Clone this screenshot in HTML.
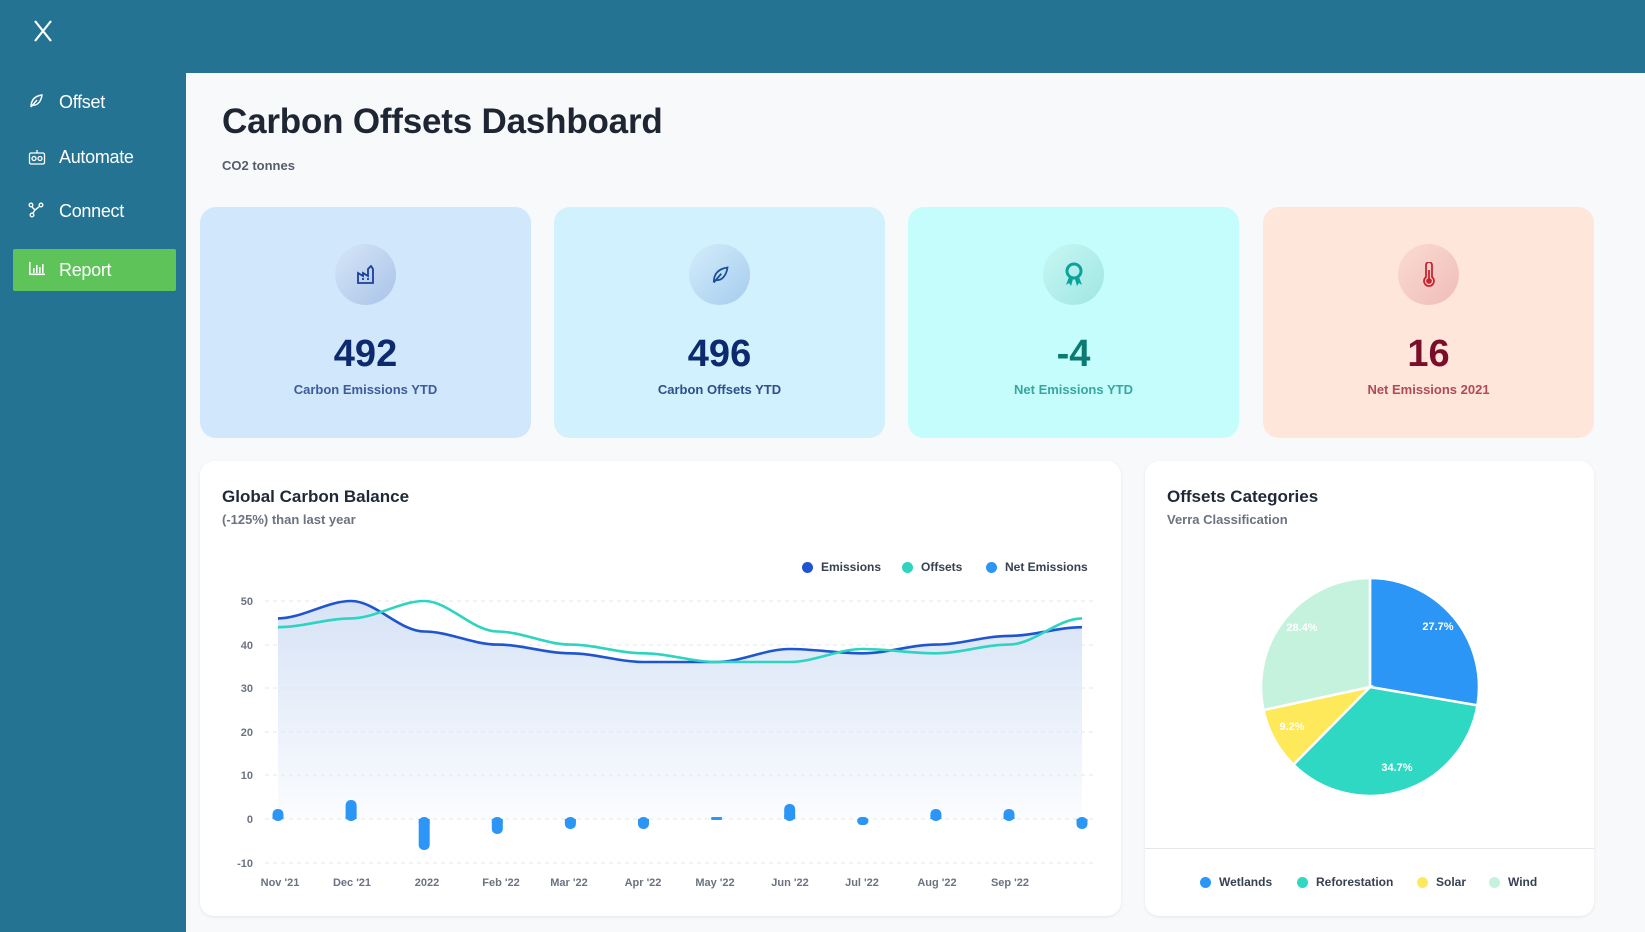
<!DOCTYPE html>
<html><head><meta charset="utf-8"><style>
*{box-sizing:border-box;margin:0;padding:0}
body{width:1645px;height:932px;overflow:hidden;background:#f8f9fb;font-family:"Liberation Sans",sans-serif;position:relative}
.hdr{position:absolute;left:0;top:0;width:1645px;height:73px;background:#247393}
.side{position:absolute;left:0;top:73px;width:186px;height:859px;background:#247393}
.nav{position:absolute;left:13px;width:163px;height:42px;color:#fff;font-size:18px;display:flex;align-items:center;padding-left:46px;letter-spacing:-0.3px}
.nav svg{position:absolute;left:15px;top:12px}
.card{position:absolute;top:207px;width:331px;height:231px;border-radius:16px;text-align:center}
.ic{position:absolute;left:135px;top:37px;width:61px;height:61px;border-radius:50%;display:flex;align-items:center;justify-content:center}
.num{position:absolute;left:0;right:0;top:126px;font-size:38px;font-weight:bold}
.lbl{position:absolute;left:0;right:0;top:175px;font-size:13px;font-weight:bold}
.panel{position:absolute;top:461px;height:455px;background:#fff;border-radius:14px;box-shadow:0 1px 3px rgba(0,0,0,.08)}
.pt{position:absolute;left:22px;top:26px;font-size:17px;font-weight:bold;color:#1f2937}
.ps{position:absolute;left:22px;top:51px;font-size:13px;font-weight:bold;color:#6b7280}
.leg{position:absolute;font-size:12px;font-weight:bold;color:#374151;display:flex;align-items:center}
.leg i{display:inline-block;width:11px;height:11px;border-radius:50%;margin-right:8px}
</style></head><body>
<div class="hdr"><svg style="position:absolute;left:33px;top:20px" width="20" height="22" viewBox="0 0 20 22"><path d="M2 1L18 21M18 1L2 21" stroke="#fff" stroke-width="2.2"/></svg></div>
<div class="side">
 <div class="nav" style="top:8px"><svg width="16" height="16" viewBox="0 0 16 16" fill="none" stroke="#fff" stroke-width="1.4"><path d="M3 14C3 7 7 3 14 2C13 9 9 13 4 12M3 14L9 7"/></svg>Offset</div>
 <div class="nav" style="top:63px"><svg width="18" height="18" viewBox="0 0 18 18" fill="none" stroke="#fff" stroke-width="1.3"><rect x="1.5" y="5" width="15" height="11" rx="1.5"/><circle cx="6" cy="10.5" r="2"/><circle cx="12" cy="10.5" r="2"/><path d="M9 5V2"/></svg>Automate</div>
 <div class="nav" style="top:117px"><svg width="16" height="16" viewBox="0 0 16 16" fill="none" stroke="#fff" stroke-width="1.4"><circle cx="3" cy="3" r="1.8"/><circle cx="13" cy="3" r="1.8"/><circle cx="4" cy="13" r="1.8"/><path d="M4 5L7 8L12 4M7 8L5 11"/></svg>Connect</div>
 <div class="nav" style="top:176px;background:#5ec45a;border-radius:2px"><svg width="18" height="16" viewBox="0 0 18 16" fill="#fff"><rect x="1" y="1" width="1.6" height="13"/><rect x="1" y="12.5" width="16" height="1.6"/><rect x="5" y="7" width="1.6" height="5"/><rect x="8" y="4" width="1.6" height="8"/><rect x="11" y="6" width="1.6" height="6"/><rect x="14" y="3" width="1.6" height="9"/></svg>Report</div>
</div>
<div style="position:absolute;left:222px;top:102px;font-size:35px;font-weight:bold;color:#1f2633;letter-spacing:-0.2px">Carbon Offsets Dashboard</div>
<div style="position:absolute;left:222px;top:158px;font-size:13px;font-weight:bold;color:#555d6b">CO2 tonnes</div>

<div class="card" style="left:200px;background:#d1e8fc">
 <div class="ic" style="background:linear-gradient(135deg,#d6e6f8,#a9c3e8)"><svg width="20" height="20" viewBox="0 0 20 20" fill="none" stroke="#1c3f9a" stroke-width="1.8"><path d="M2 18V8L7 11V8L12 11V4L15 1L17 4V18Z"/><path d="M6 14h2M11 14h2"/></svg></div>
 <div class="num" style="color:#0d2a6e">492</div><div class="lbl" style="color:#3e5b9a">Carbon Emissions YTD</div></div>
<div class="card" style="left:554px;background:#d0f1fd">
 <div class="ic" style="background:linear-gradient(135deg,#d4ecfb,#a5cdee)"><svg width="20" height="20" viewBox="0 0 16 16" fill="none" stroke="#1c4f9a" stroke-width="1.4"><path d="M3 14C3 7 7 3 14 2C13 9 9 13 4 12M3 14L9 7"/></svg></div>
 <div class="num" style="color:#0d2a6e">496</div><div class="lbl" style="color:#2e4f8a">Carbon Offsets YTD</div></div>
<div class="card" style="left:908px;background:#c4fdfc">
 <div class="ic" style="background:linear-gradient(135deg,#c8f7f4,#9ee6e2)"><svg width="20" height="26" viewBox="0 0 20 26" fill="#0aa39a"><circle cx="10" cy="9" r="7" fill="none" stroke="#0aa39a" stroke-width="3"/><path d="M5 15L2 23L5 21L7 24L9 17ZM15 15L18 23L15 21L13 24L11 17Z"/></svg></div>
 <div class="num" style="color:#0b7a73">-4</div><div class="lbl" style="color:#3aa6a0">Net Emissions YTD</div></div>
<div class="card" style="left:1263px;background:#fee6da">
 <div class="ic" style="background:linear-gradient(135deg,#fadbd3,#f0bdb8)"><svg width="14" height="26" viewBox="0 0 14 26" fill="none" stroke="#c9252f" stroke-width="1.8"><path d="M4 3a3 3 0 0 1 6 0V15a5 5 0 1 1-6 0Z"/><circle cx="7" cy="19" r="2" fill="#c9252f"/><path d="M7 8V18"/></svg></div>
 <div class="num" style="color:#7a0d2a">16</div><div class="lbl" style="color:#b04a5a">Net Emissions 2021</div></div>

<div class="panel" style="left:200px;width:921px">
 <div class="pt">Global Carbon Balance</div><div class="ps">(-125%) than last year</div>
 <div class="leg" style="left:602px;top:99px"><i style="background:#1e55d0"></i>Emissions</div>
 <div class="leg" style="left:702px;top:99px"><i style="background:#2dd4bf"></i>Offsets</div>
 <div class="leg" style="left:786px;top:99px"><i style="background:#2b96f5"></i>Net Emissions</div>
</div>
<svg style="position:absolute;left:0;top:0" width="1645" height="932">
 <defs><linearGradient id="g" x1="0" y1="0" x2="0" y2="1"><stop offset="0" stop-color="#d7e3f6"/><stop offset="1" stop-color="#d7e3f6" stop-opacity="0.1"/></linearGradient></defs>
 <g stroke="#e5e7eb" stroke-dasharray="4 4" stroke-width="1">
  <path d="M265 601H1097M265 645H1097M265 688H1097M265 732H1097M265 775H1097M265 819H1097M265 863H1097"/>
 </g>
 <g font-size="11" font-weight="bold" fill="#6b7280" text-anchor="end" font-family="Liberation Sans">
  <text x="253" y="605">50</text><text x="253" y="649">40</text><text x="253" y="692">30</text><text x="253" y="736">20</text><text x="253" y="779">10</text><text x="253" y="823">0</text><text x="253" y="867">-10</text>
 </g>
 <path d="M278,618.4 C302.4,618.4 326.7,601 351.1,601 S399.8,631.5 424.2,631.5 S472.9,644.6 497.3,644.6 S546,653.3 570.4,653.3 S619.1,662 643.5,662 S692.2,662 716.6,662 S765.3,649 789.7,649 S838.4,653.3 862.8,653.3 S911.5,644.6 935.9,644.6 S984.6,635.9 1009,635.9 S1057.6,627.2 1082,627.2 L1082,819 L278,819Z" fill="url(#g)"/>
 <path d="M278,618.4 C302.4,618.4 326.7,601 351.1,601 S399.8,631.5 424.2,631.5 S472.9,644.6 497.3,644.6 S546,653.3 570.4,653.3 S619.1,662 643.5,662 S692.2,662 716.6,662 S765.3,649 789.7,649 S838.4,653.3 862.8,653.3 S911.5,644.6 935.9,644.6 S984.6,635.9 1009,635.9 S1057.6,627.2 1082,627.2" fill="none" stroke="#1e55d0" stroke-width="2.6"/>
 <path d="M278,627.2 C302.4,627.2 326.7,618.4 351.1,618.4 S399.8,601 424.2,601 S472.9,631.5 497.3,631.5 S546,644.6 570.4,644.6 S619.1,653.3 643.5,653.3 S692.2,662 716.6,662 S765.3,662 789.7,662 S838.4,649 862.8,649 S911.5,653.3 935.9,653.3 S984.6,644.6 1009,644.6 S1057.6,618.4 1082,618.4" fill="none" stroke="#2dd4bf" stroke-width="2.6"/>
 <g fill="#2b96f5">
  <rect x="272.5" y="809" width="11" height="12" rx="5"/>
  <rect x="345.6" y="800" width="11" height="21" rx="5"/>
  <rect x="418.7" y="817" width="11" height="33" rx="5"/>
  <rect x="491.8" y="817" width="11" height="17" rx="5"/>
  <rect x="564.9" y="817" width="11" height="12" rx="5"/>
  <rect x="638" y="817" width="11" height="12" rx="5"/>
  <rect x="711.1" y="817" width="11" height="3" rx="1"/>
  <rect x="784.2" y="804" width="11" height="17" rx="5"/>
  <rect x="857.3" y="817" width="11" height="8" rx="4"/>
  <rect x="930.4" y="809" width="11" height="12" rx="5"/>
  <rect x="1003.5" y="809" width="11" height="12" rx="5"/>
  <rect x="1076.5" y="817" width="11" height="12" rx="5"/>
 </g>
 <g fill="#2b96f5">
  <rect x="272.5" y="815" width="11" height="4"/><rect x="345.6" y="815" width="11" height="4"/><rect x="784.2" y="815" width="11" height="4"/><rect x="930.4" y="815" width="11" height="4"/><rect x="1003.5" y="815" width="11" height="4"/>
  <rect x="418.7" y="819" width="11" height="4"/><rect x="491.8" y="819" width="11" height="4"/><rect x="564.9" y="819" width="11" height="4"/><rect x="638" y="819" width="11" height="4"/><rect x="857.3" y="819" width="11" height="3"/><rect x="1076.5" y="819" width="11" height="4"/>
 </g>
 <g font-size="11" font-weight="bold" fill="#6b7280" text-anchor="middle" font-family="Liberation Sans">
  <text x="280" y="886">Nov '21</text><text x="352" y="886">Dec '21</text><text x="427" y="886">2022</text><text x="501" y="886">Feb '22</text><text x="569" y="886">Mar '22</text><text x="643" y="886">Apr '22</text><text x="715" y="886">May '22</text><text x="790" y="886">Jun '22</text><text x="862" y="886">Jul '22</text><text x="937" y="886">Aug '22</text><text x="1010" y="886">Sep '22</text>
 </g>
</svg>

<div class="panel" style="left:1145px;width:449px">
 <div class="pt">Offsets Categories</div><div class="ps">Verra Classification</div>
 <div style="position:absolute;left:0;right:0;top:387px;border-top:1px solid #e5e7eb"></div>
 <div class="leg" style="left:55px;top:414px"><i style="background:#2b96f5"></i>Wetlands</div>
 <div class="leg" style="left:152px;top:414px"><i style="background:#2ed8c3"></i>Reforestation</div>
 <div class="leg" style="left:272px;top:414px"><i style="background:#fde95a"></i>Solar</div>
 <div class="leg" style="left:344px;top:414px"><i style="background:#c4f2dd"></i>Wind</div>
</div>
<svg style="position:absolute;left:0;top:0" width="1645" height="932">
 <g stroke="#fff" stroke-width="2.5">
  <path d="M1370,687 L1370,578 A109,109 0 0 1 1477.4,705.4Z" fill="#2b96f5"/>
  <path d="M1370,687 L1477.4,705.4 A109,109 0 0 1 1293.5,764.6Z" fill="#2ed8c3"/>
  <path d="M1370,687 L1293.5,764.6 A109,109 0 0 1 1263.5,710Z" fill="#fde95a"/>
  <path d="M1370,687 L1263.5,710 A109,109 0 0 1 1370,578Z" fill="#c4f2dd"/>
 </g>
 <g font-size="11" font-weight="bold" fill="#fff" text-anchor="middle" font-family="Liberation Sans">
  <text x="1438" y="630">27.7%</text><text x="1397" y="771">34.7%</text><text x="1292" y="730">9.2%</text><text x="1302" y="631">28.4%</text>
 </g>
</svg>
</body></html>
